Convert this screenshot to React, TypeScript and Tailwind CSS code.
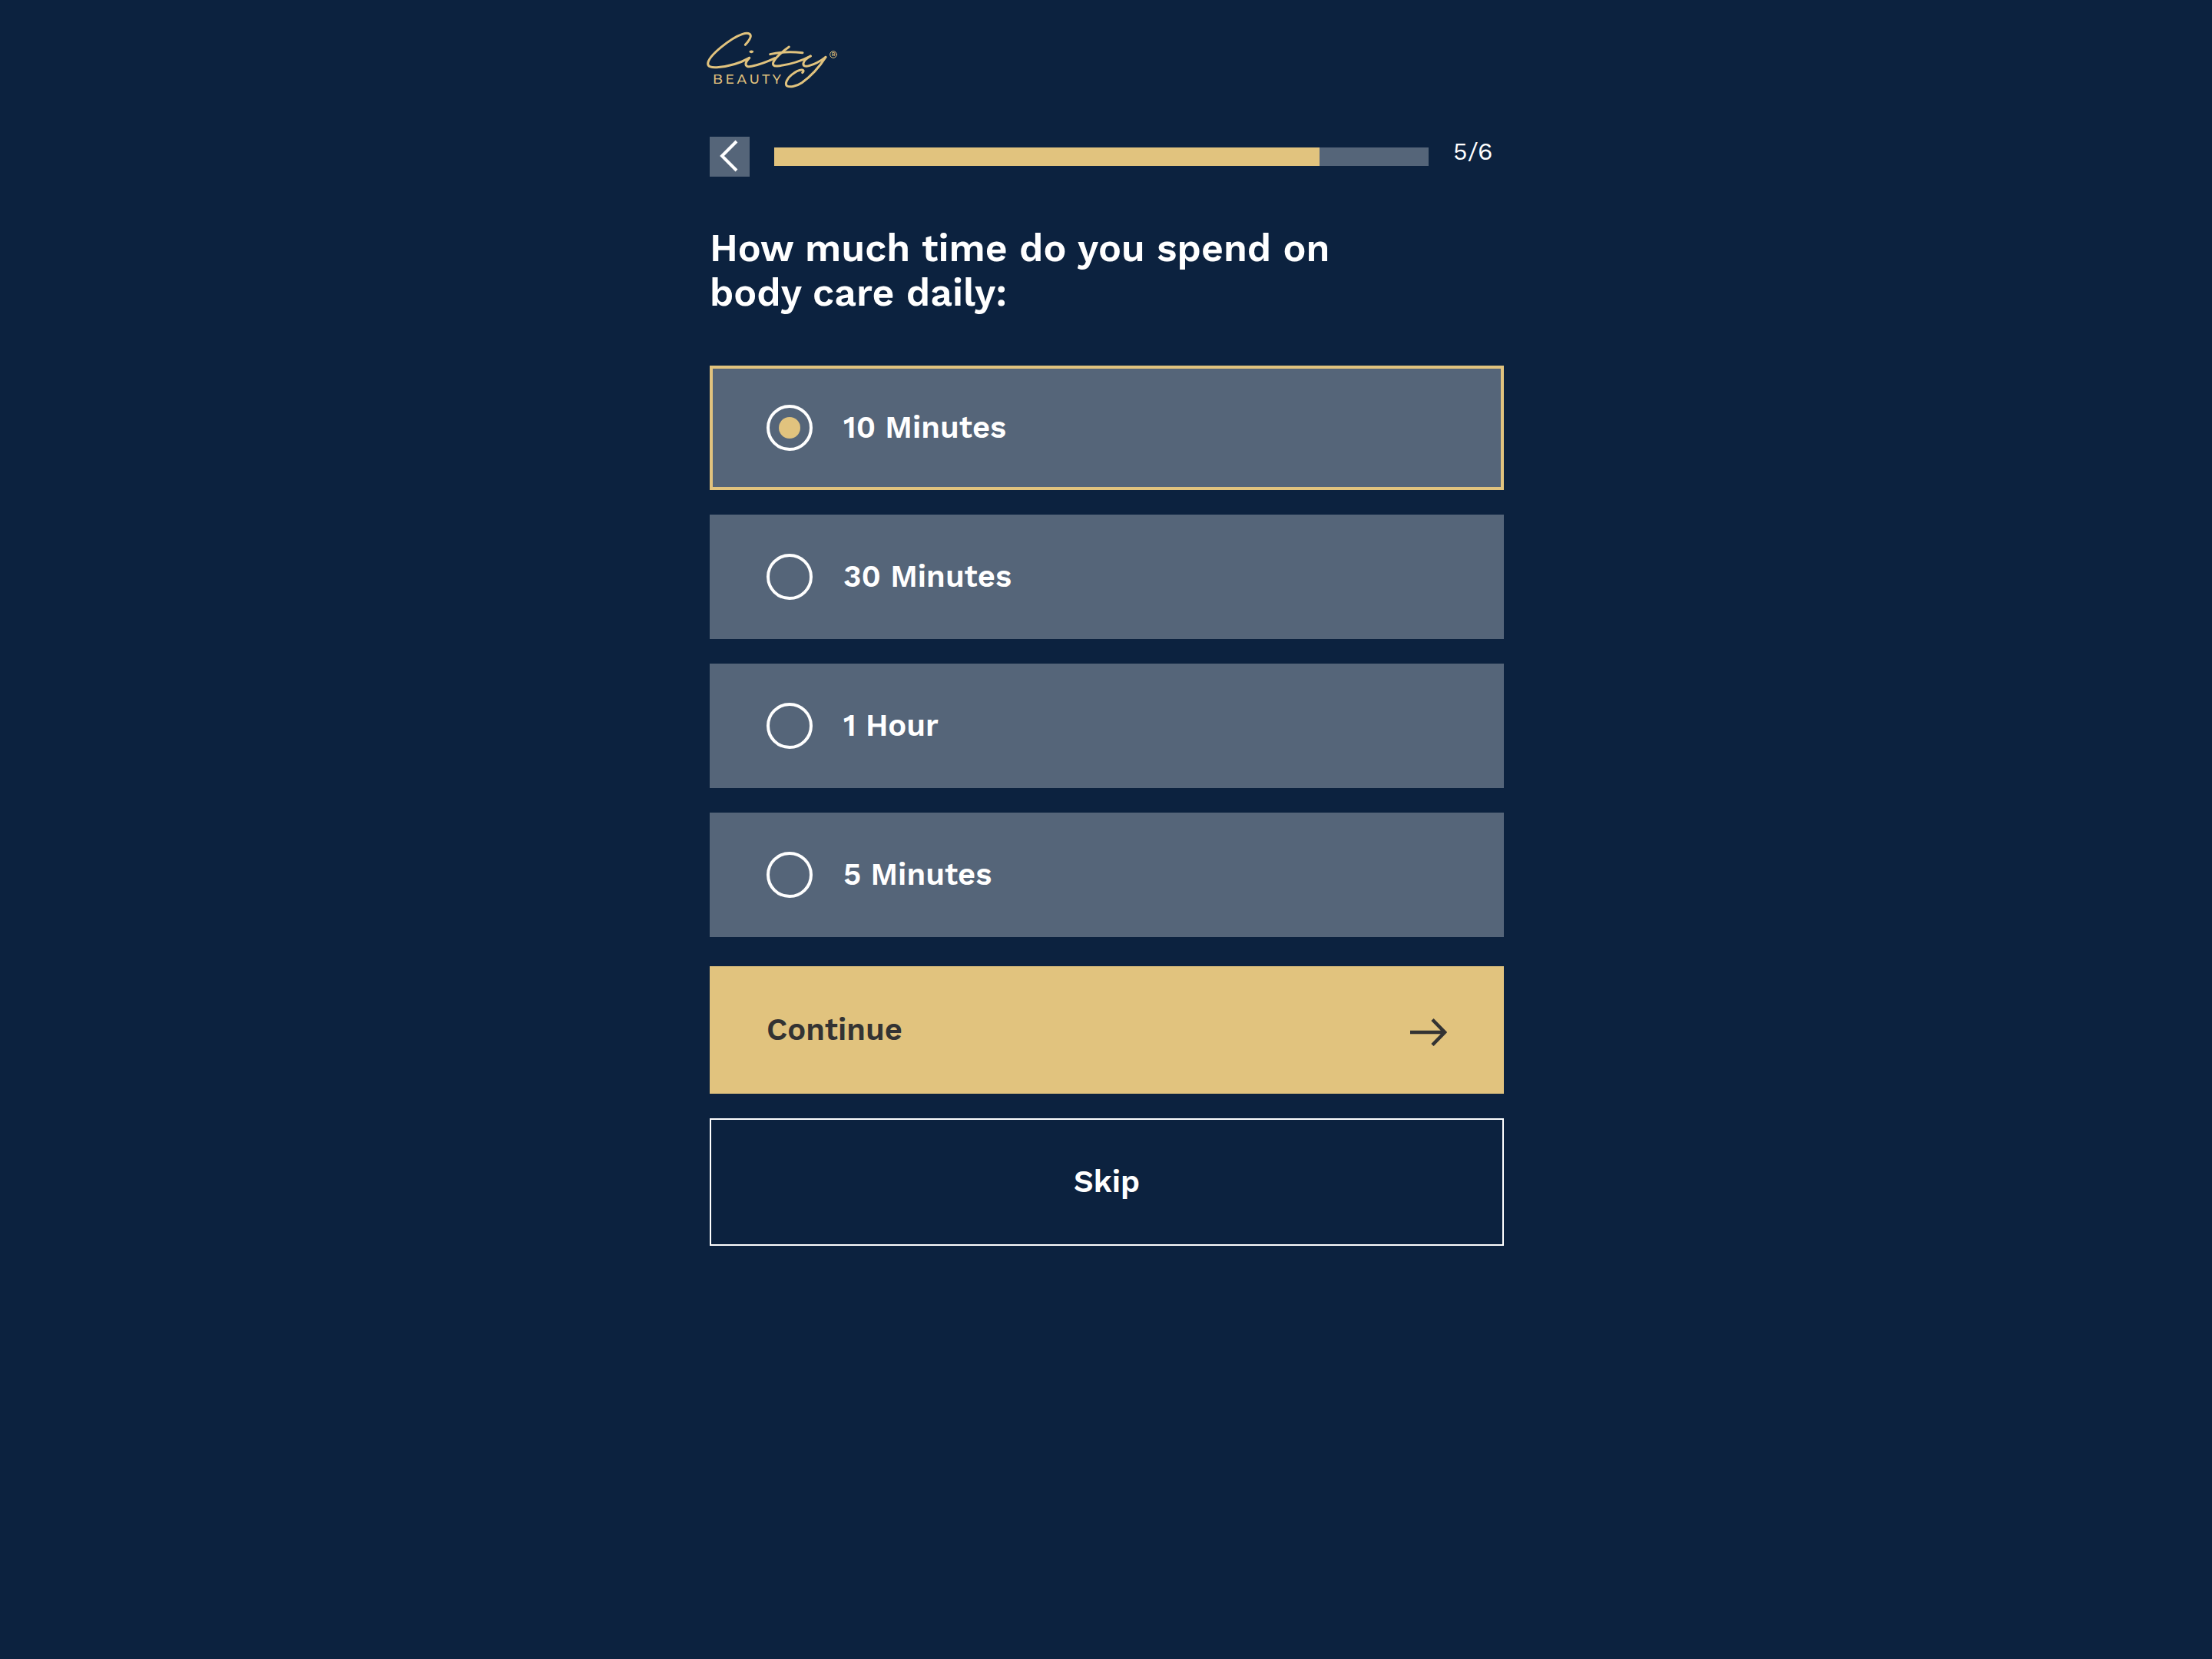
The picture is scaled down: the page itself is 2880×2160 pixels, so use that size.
import { useState } from 'react';

const STEP = 5;
const TOTAL = 6;
const OPTIONS = ['10 Minutes', '30 Minutes', '1 Hour', '5 Minutes'];

function Logo() {
  return (
    <svg
      viewBox="30 30 516 225"
      className="h-[75px] w-[172px] overflow-visible"
      fill="none"
      stroke="#e1c37e"
      strokeWidth="9"
      strokeLinecap="round"
      strokeLinejoin="round"
      role="img"
      aria-label="City Beauty"
    >
      <path d="M181 85C192 73 202 62 202 51C202 39 188 37 170 43C125 58 36 128 35 159C35 171 48 174 70 173C115 170 163 155 197 136" />
      <path d="M197 136C190 143 184 151 183 159C182 169 191 172 206 169C238 162 268 151 297 137" />
      <path d="M352 93C328 110 300 135 292 150C286 163 291 169 306 168C345 164 396 150 436 129" />
      <path d="M278 122C318 112 362 112 405 116" />
      <path d="M436 129C422 137 410 148 408 157C406 168 415 171 430 167C455 160 477 147 495 133" />
      <path d="M495 133C474 166 440 206 402 233C378 249 354 252 343 245C335 237 345 215 362 202C377 190 392 182 402 183C411 184 409 190 404 194" />
      <ellipse cx="205" cy="112" rx="6" ry="3" fill="#e1c37e" strokeWidth="5" />
      <g fill="#e1c37e" stroke="none" className="font-['Montserrat','Work_Sans','Inter',sans-serif]">
        <text x="54" y="237" fontSize="51" className="font-medium tracking-[11px]">
          BEAUTY
        </text>
        <text x="525" y="130" fontSize="19" textAnchor="middle" className="font-semibold">
          R
        </text>
      </g>
      <circle cx="525" cy="123" r="13" strokeWidth="3" />
    </svg>
  );
}

export default function App() {
  const [selected, setSelected] = useState(OPTIONS[0]);

  return (
    <div className="min-h-screen bg-[#0c223f] font-['Work_Sans','Inter',sans-serif] text-white">
      <main className="mx-auto flex max-w-[1036px] flex-col pt-10 pb-16 pl-0.5">
        <a href="#home" className="-ml-1 self-start">
          <Logo />
        </a>

        <div className="mt-[63px] flex items-center gap-8">
          <button type="button" aria-label="Back" className="size-[52px] shrink-0 bg-[#556579]">
            <svg viewBox="0 0 52 52" className="size-full" fill="none" stroke="currentColor" strokeWidth="4">
              <path d="M35 6L16 25L35 44" />
            </svg>
          </button>
          <div
            role="progressbar"
            aria-label="Quiz progress"
            aria-valuemin={0}
            aria-valuemax={TOTAL}
            aria-valuenow={STEP}
            className="h-6 flex-1 bg-[#556579]"
          >
            <div className="h-full bg-[#e1c37e]" style={{ width: `${(STEP / TOTAL) * 100}%` }} />
          </div>
          <p className="w-[66px] self-start text-[32px] leading-[38px]">
            {STEP}/{TOTAL}
          </p>
        </div>

        <form onSubmit={(e) => e.preventDefault()}>
          <h1 id="question" className="mt-16 max-w-[900px] text-[50px] leading-[58px] font-semibold">
            How much time do you spend on body care daily:
          </h1>

          <div role="radiogroup" aria-labelledby="question" className="mt-[66px] flex flex-col gap-8">
            {OPTIONS.map((option) => (
              <label
                key={option}
                className="flex h-[162px] cursor-pointer items-center gap-10 border-4 border-[#556579] bg-[#556579] px-[70px] text-[40px] leading-[48px] font-semibold has-checked:border-[#e1c37e]"
              >
                <input
                  type="radio"
                  name="time"
                  value={option}
                  checked={selected === option}
                  onChange={() => setSelected(option)}
                  className="grid size-[60px] shrink-0 appearance-none place-items-center rounded-full border-4 border-white before:size-7 before:rounded-full checked:before:bg-[#e1c37e]"
                />
                {option}
              </label>
            ))}
          </div>

          <button
            type="submit"
            className="mt-[38px] flex h-[166px] w-full items-center justify-between bg-[#e1c37e] px-[74px] text-[40px] leading-[48px] font-semibold text-[#333333]"
          >
            Continue
            <svg viewBox="0 0 48 42" className="h-[42px] w-12" fill="none" stroke="currentColor" strokeWidth="4.5" aria-hidden="true">
              <path d="M0 24H45M29 7.5L45 24L29 40.5" />
            </svg>
          </button>
          <button
            type="button"
            className="mt-8 h-[166px] w-full border-2 border-white text-[40px] leading-[48px] font-semibold"
          >
            Skip
          </button>
        </form>
      </main>
    </div>
  );
}
